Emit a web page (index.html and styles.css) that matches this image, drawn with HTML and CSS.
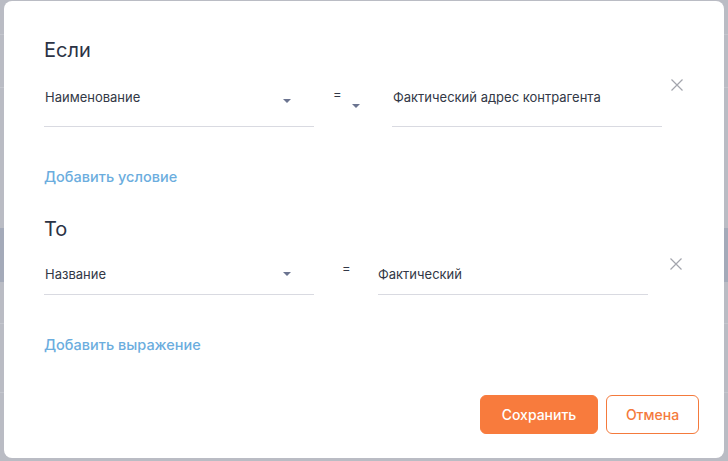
FILE: index.html
```html
<!DOCTYPE html>
<html lang="ru">
<head>
  <meta charset="UTF-8" />
  <meta name="viewport" content="width=device-width, initial-scale=1.0"/>
  <title>Правило</title>
  <link rel="stylesheet" href="styles.css">
</head>
<body>

  <div class="modal">
    <h3 class="section-title">Если</h3>

    <div class="rule-row rule-if">
      <div class="field select">
        <span>Наименование</span>
        <svg class="caret" width="8" height="4" viewBox="0 0 8 4"><path d="M0 0h8L4 4z"/></svg>
      </div>
      <div class="operator op-select">
        <span class="eq">=</span>
        <svg class="caret" width="8" height="4" viewBox="0 0 8 4"><path d="M0 0h8L4 4z"/></svg>
      </div>
      <div class="field input">
        <span>Фактический адрес контрагента</span>
      </div>
      <button class="remove" title="Удалить">
        <svg width="12" height="12" viewBox="0 0 12 12"><path d="M0.5 0.5l11 11M11.5 0.5l-11 11"/></svg>
      </button>
    </div>

    <a class="add-link link-if">Добавить условие</a>

    <h3 class="section-title title-then">То</h3>

    <div class="rule-row rule-then">
      <div class="field select">
        <span>Название</span>
        <svg class="caret" width="8" height="4" viewBox="0 0 8 4"><path d="M0 0h8L4 4z"/></svg>
      </div>
      <div class="operator op-plain">
        <span class="eq">=</span>
      </div>
      <div class="field input">
        <span>Фактический</span>
      </div>
      <button class="remove" title="Удалить">
        <svg width="12" height="12" viewBox="0 0 12 12"><path d="M0.5 0.5l11 11M11.5 0.5l-11 11"/></svg>
      </button>
    </div>

    <a class="add-link link-then">Добавить выражение</a>

    <div class="actions">
      <button class="btn btn-primary">Сохранить</button>
      <button class="btn btn-outline">Отмена</button>
    </div>
  </div>

</body>
</html>
```

FILE: styles.css
```css
html, body {
  margin: 0;
  height: 100%;
  overflow: hidden;
}
body {
  font-family: Inter, "Noto Sans", sans-serif;
  background:
    linear-gradient(to bottom,
      #babcc4 0, #babcc4 34px, #c4c6cd 34px, #c4c6cd 35px,
      #babcc4 35px, #babcc4 87px, #c4c6cd 87px, #c4c6cd 88px,
      #babcc4 88px, #babcc4 228px, #a4aab9 228px, #a4aab9 282px,
      #babcc4 282px, #babcc4 323px, #c4c6cd 323px, #c4c6cd 324px,
      #babcc4 324px, #babcc4 392px, #c4c6cd 392px, #c4c6cd 393px,
      #babcc4 393px);
  color: #323846;
}
.modal {
  margin: 1px 4px 0 4px;
  width: 720px;
  height: 457px;
  box-sizing: border-box;
  background: #fff;
  border-radius: 8px;
  padding: 37px 24px 24px 40px;
  display: flex;
  flex-direction: column;
}
.section-title {
  margin: 0;
  font-size: 20px;
  line-height: 24px;
  font-weight: 400;
  color: #2c3345;
}
.title-then {
  margin-top: 30px;
}
.rule-row {
  display: flex;
  align-items: flex-start;
  margin-top: 17px;
}
.field {
  width: 270px;
  box-sizing: border-box;
  border-bottom: 1px solid #d9dae1;
  font-size: 13px;
  line-height: 20px;
  display: flex;
  align-items: center;
  justify-content: space-between;
}
.rule-if .field {
  padding: 8px 0 19px 1px;
}
.rule-then .field {
  padding: 6px 0 10px 1px;
}
.caret {
  fill: #6b7490;
  flex: none;
}
.select .caret {
  margin-right: 23px;
  margin-top: 7px;
}
.rule-then .select .caret {
  margin-top: 0;
}
.operator {
  display: flex;
  align-items: flex-start;
  font-size: 13px;
  line-height: 20px;
}
.op-select {
  width: 78px;
  padding: 5px 0 0 19px;
  box-sizing: border-box;
}
.op-select .caret {
  margin: 20px 0 0 10px;
}
.op-plain {
  width: 64px;
  padding: 0 0 0 28px;
  box-sizing: border-box;
}
.rule-if .input {
  padding-left: 1px;
}
.rule-then .input {
  padding-left: 0;
}
.remove {
  border: 0;
  background: none;
  padding: 0;
  margin-left: 9px;
  width: 12px;
  height: 12px;
  display: block;
}
.remove svg {
  display: block;
  stroke: #a3a5ad;
  stroke-width: 1.2;
}
.rule-then .remove {
  margin-left: 22px;
}
.add-link {
  margin-top: 40px;
  font-size: 14.5px;
  line-height: 20px;
  font-weight: 500;
  color: #6badde;
  cursor: pointer;
}
.actions {
  margin-top: auto;
  display: flex;
  justify-content: flex-end;
  gap: 8px;
}
.btn {
  font-family: inherit;
  font-size: 14px;
  font-weight: 500;
  height: 39px;
  border-radius: 6px;
  box-sizing: border-box;
  cursor: pointer;
}
.btn-primary {
  width: 118px;
  background: #f87b3d;
  color: #fff;
  border: 1px solid #f87b3d;
}
.btn-outline {
  width: 93px;
  margin-right: 1px;
  background: #fff;
  color: #f47a3c;
  border: 1px solid #f47a3c;
}
```
